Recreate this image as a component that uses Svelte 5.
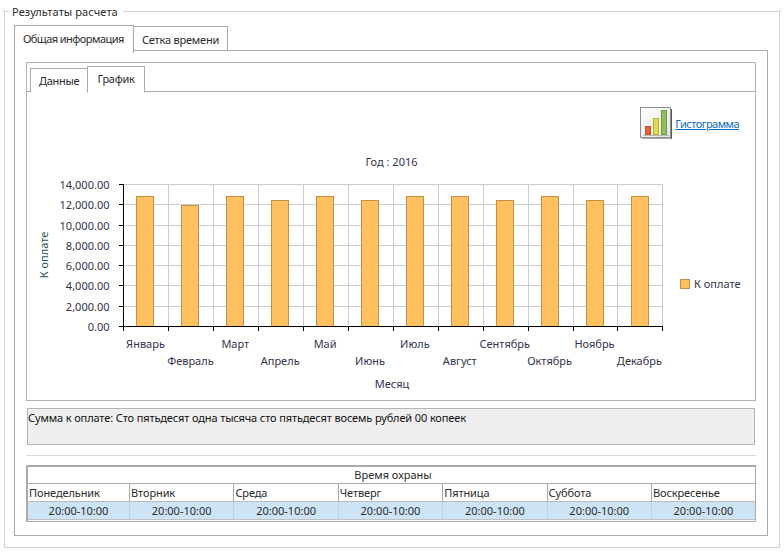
<script>
  const months = [
    ["Январь", 12850], ["Февраль", 11900], ["Март", 12850], ["Апрель", 12430],
    ["Май", 12850], ["Июнь", 12430], ["Июль", 12850], ["Август", 12850],
    ["Сентябрь", 12430], ["Октябрь", 12850], ["Ноябрь", 12430], ["Декабрь", 12850]
  ];
  const days = ["Понедельник", "Вторник", "Среда", "Четверг", "Пятница", "Суббота", "Воскресенье"];
  const ticks = [0, 2000, 4000, 6000, 8000, 10000, 12000, 14000];

  const left = 123.5, step = 44.9, bottom = 326, plotH = 142;
  const yOf = (v) => Math.round(bottom - (v / 14000) * plotH) + 0.5;
  const fmt = (v) => v.toLocaleString("en-US", { minimumFractionDigits: 2 });
</script>

<fieldset class="group">
  <legend>Результаты расчета</legend>
  <div class="tabs outer-tabs">
    <div class="tab active first">Общая информация</div>
    <div class="tab">Сетка времени</div>
  </div>
  <div class="panel outer">
    <div class="inner">
      <div class="tabs inner-tabs">
        <div class="tab small">Данные</div>
        <div class="tab small active">График</div>
      </div>
      <div class="chart-wrap">
        <svg class="chart" width="728" height="308" viewBox="27 92 728 308">
          <g class="grid">
            {#each ticks as t}
              <line x1="119" x2="662" y1={yOf(t)} y2={yOf(t)} />
            {/each}
            {#each months as m, i}
              <line x1={Math.round(left + step * (i + 1)) + 0.5} x2={Math.round(left + step * (i + 1)) + 0.5} y1="184" y2="326" />
            {/each}
          </g>
          {#each months as m, i}
            <rect class="bar" x={136.5 + 45 * i} y={yOf(m[1])} width="17" height={326.5 - yOf(m[1])} />
          {/each}
          <g class="axis">
            <line x1="123.5" x2="123.5" y1="184" y2="331" />
            <line x1="119" x2="663" y1="326.5" y2="326.5" />
            {#each ticks as t}
              <line x1="119" x2="123" y1={yOf(t)} y2={yOf(t)} />
            {/each}
            {#each months as m, i}
              <line x1={Math.round(left + step * (i + 1)) + 0.5} x2={Math.round(left + step * (i + 1)) + 0.5} y1="326" y2="331" />
            {/each}
          </g>
          {#each ticks as t}
            <text class="lbl" x="109.5" y={yOf(t) + 4} text-anchor="end">{fmt(t)}</text>
          {/each}
          {#each months as m, i}
            <text class="lbl" x={left + step * i + 22} y={i % 2 ? 365 : 348} text-anchor="middle">{m[0]}</text>
          {/each}
          <text class="lbl" x="391.5" y="166" text-anchor="middle">Год : 2016</text>
          <text class="lbl" x="392" y="388" text-anchor="middle">Месяц</text>
          <text class="ytitle" transform="translate(47.5 255) rotate(-90)" text-anchor="middle">К оплате</text>
          <rect class="bar" x="680.5" y="279.5" width="9" height="9" />
          <text class="lbl" x="694" y="288">К оплате</text>
        </svg>
        <div class="histogram">
          <svg width="32" height="32" viewBox="0 0 32 32">
            <defs>
              <linearGradient id="bg" x1="0" y1="0" x2="1" y2="1">
                <stop offset="0" stop-color="#ffffff" />
                <stop offset="1" stop-color="#e4e4e0" />
              </linearGradient>
            </defs>
            <rect x="0.5" y="0.5" width="30" height="30" fill="url(#bg)" stroke="#8f8f8f" />
            <path d="M31.5 2v30H2" fill="none" stroke="#555" />
            <rect x="5.5" y="19.5" width="5" height="8" fill="#e8603a" stroke="#c8512c" />
            <rect x="13.5" y="11.5" width="5" height="16" fill="#e3d94f" stroke="#b9b03c" />
            <rect x="21.5" y="3.5" width="5" height="24" fill="#8dbd5c" stroke="#6f9c48" />
            <line x1="3" x2="29" y1="28.5" y2="28.5" stroke="#bbb" />
          </svg>
          <a href="#hist">Гистограмма</a>
        </div>
      </div>
    </div>
    <div class="sum">Сумма к оплате: Сто пятьдесят одна тысяча сто пятьдесят восемь рублей 00 копеек</div>
    <hr />
    <div class="table">
      <div class="caption">Время охраны</div>
      <div class="row head">
        {#each days as d}<div class="cell">{d}</div>{/each}
      </div>
      <div class="row data">
        {#each days as d}<div class="cell">20:00-10:00</div>{/each}
      </div>
    </div>
  </div>
</fieldset>

<style>
  :global(body) {
    background: #fff;
    color: #2b2b2b;
    font-family: "Noto Sans", "DejaVu Sans", sans-serif;
    font-size: 11px;
  }
  .group {
    box-sizing: border-box;
    width: 776px;
    height: 544px;
    margin: 4px 0 0 4px;
    padding: 5px 11px 12px 9px;
    border: 1px solid #d2d2d2;
    min-width: 0;
  }
  legend {
    margin-left: -5px;
    padding: 0 5px 0 3px;
    line-height: 15px;
    letter-spacing: 0.1px;
  }
  .tabs {
    display: flex;
    align-items: flex-end;
    white-space: nowrap;
  }
  .outer-tabs {
    height: 26px;
  }
  .tab {
    box-sizing: border-box;
    height: 24px;
    margin-top: auto;
    border: 1px solid #aaa;
    border-bottom: none;
    padding: 5px 8px 0;
    line-height: 15px;
    background: #fff;
    letter-spacing: -0.2px;
  }
  .tab.first {
    width: 120px;
    height: 28px;
    padding: 5px 8px 0;
    position: relative;
    top: 1px;
    z-index: 1;
    letter-spacing: -0.55px;
  }
  .tab:not(.first) {
    margin-left: -1px;
  }
  .outer-tabs .tab:not(.first) {
    width: 95px;
  }
  .panel.outer {
    box-sizing: border-box;
    height: 486px;
    border: 1px solid #aaa;
    padding: 11px 11px 0;
  }
  .inner {
    box-sizing: border-box;
    height: 339px;
    border: 1px solid #b4b4b4;
    padding-top: 3px;
  }
  .inner-tabs {
    padding-left: 4px;
    border-bottom: 1px solid #aaa;
    height: 25px;
  }
  .tab.small {
    width: 58px;
    height: 24px;
    margin-bottom: -1px;
    padding: 4px 8px 0;
    text-align: center;
    letter-spacing: -0.3px;
  }
  .tab.small.active {
    height: 27px;
    padding-top: 4px;
    border-bottom: 1px solid #fff;
  }
  .chart-wrap {
    position: relative;
  }
  .chart {
    display: block;
  }
  .histogram {
    position: absolute;
    top: 15px;
    right: 16px;
    display: flex;
    align-items: center;
    gap: 3px;
  }
  .histogram a {
    color: #0a6cc9;
    letter-spacing: -0.55px;
  }
  .grid line {
    stroke: #cccccc;
    stroke-width: 1;
  }
  .axis line {
    stroke: #000;
    stroke-width: 1;
  }
  .bar {
    fill: #ffc060;
    stroke: #bd9148;
  }
  .lbl {
    font-size: 11px;
    fill: #33334d;
  }
  .ytitle {
    font-size: 11px;
    fill: #1c5a5a;
  }
  .sum {
    box-sizing: border-box;
    height: 37px;
    margin: 7px 1px 0;
    padding: 1px 0;
    background: #efefef;
    border: 1px solid #b4b4b4;
    line-height: 15px;
    color: #111;
    letter-spacing: -0.125px;
  }
  hr {
    height: 1px;
    margin: 10px 0 9px;
    border: 0;
    background: #d8d8d8;
  }
  .table {
    box-sizing: border-box;
    height: 57px;
    border: 1px solid #aaa;
    border-top-width: 2px;
    border-left-width: 2px;
  }
  .caption {
    height: 16px;
    line-height: 16px;
    padding-left: 3px;
    text-align: center;
    border-bottom: 1px solid #aaa;
  }
  .row {
    display: grid;
    grid-template-columns: 102px repeat(5, 104.4px) 1fr;
  }
  .head .cell {
    height: 18px;
    line-height: 17px;
    padding-left: 1px;
    border-right: 1px solid #aaa;
    border-bottom: 1px solid #bbb;
    box-sizing: border-box;
    letter-spacing: -0.1px;
  }
  .head .cell:last-child {
    border-right: 0;
  }
  .data {
    background: #cde4f7;
    border-bottom: 1px solid #c0c0c0;
  }
  .data .cell {
    height: 17px;
    line-height: 17px;
    text-align: center;
    border-right: 1px solid #bfd0dc;
    box-sizing: border-box;
  }
  .data .cell:last-child {
    border-right: 0;
  }
</style>
